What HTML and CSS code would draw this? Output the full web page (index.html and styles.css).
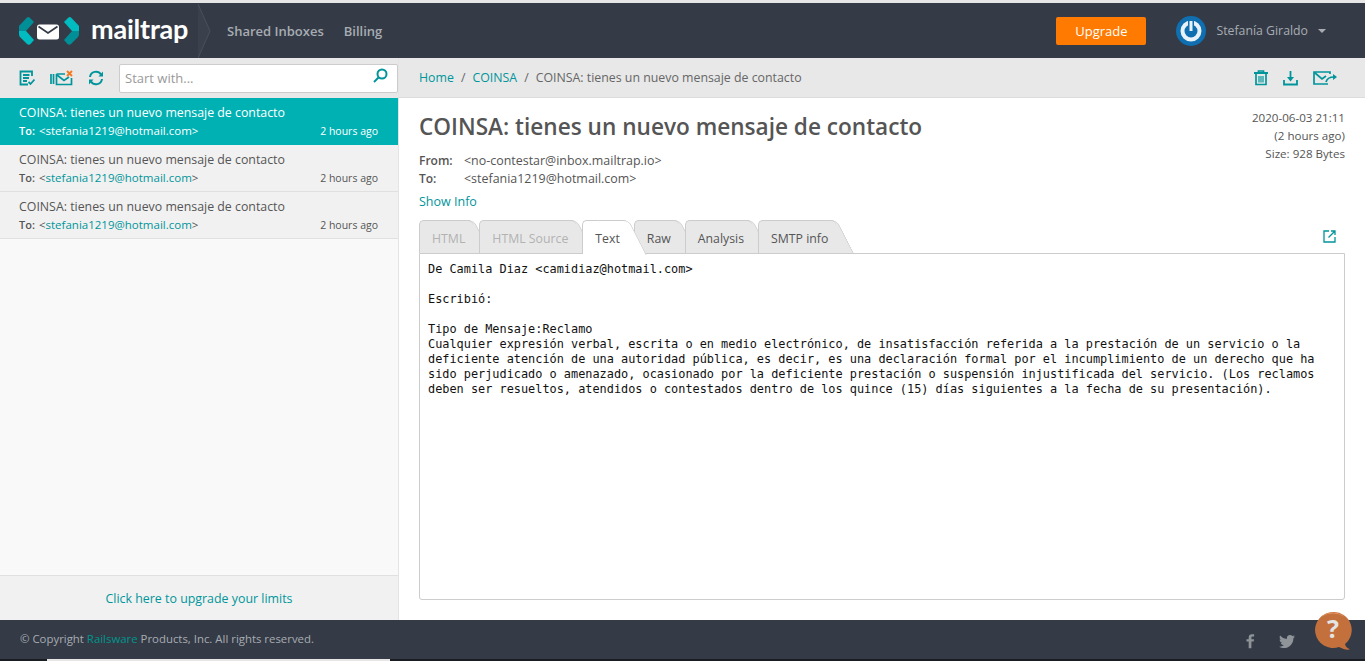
FILE: index.html
```html
<!DOCTYPE html>
<html lang="en">
<head>
    <meta charset="UTF-8">
    <title>Mailtrap</title>
    <link rel="stylesheet" href="styles.css">
</head>
<body>

    <div class="top-strip"></div>

    <header class="navbar">
        <div class="logo">
            <svg width="60" height="28" viewBox="0 0 60 28">
                <path d="M8 0.500 Q9.500 -0.500 11 1 L15 5 L7 14 L0 14 L0 9 Z" fill="#008f96"/>
                <path d="M0 14 L7 14 L15 23 L11.500 27 Q10 28.500 8 27 L1 20 Q0 19 0 17 Z" fill="#00bcc0"/>
                <path d="M52 0.500 Q50.500 -0.500 49 1 L45 5 L53 14 L60 14 L60 9 Z" fill="#00bcc0"/>
                <path d="M60 14 L53 14 L45 23 L48.500 27 Q50 28.500 52 27 L59 20 Q60 19 60 17 Z" fill="#008f96"/>
                <rect x="18" y="7.500" width="22" height="15" rx="2.500" fill="#fff"/>
                <path d="M19.500 9.500 L29 16 L38.500 9.500" fill="none" stroke="#343b47" stroke-width="1.800"/>
            </svg>
            <span class="logo-text">mailtrap</span>
        </div>
        <svg class="nav-chevron" width="14" height="54" viewBox="0 0 14 54">
            <path d="M0 0 L12 27 L0 54" fill="#3a414d" stroke="#4a515c" stroke-width="1"/>
        </svg>
        <nav class="nav-links">
            <a href="#">Shared Inboxes</a>
            <a href="#">Billing</a>
        </nav>
        <a class="btn-upgrade" href="#">Upgrade</a>
        <div class="user">
            <svg width="30" height="30" viewBox="0 0 30 30">
                <circle cx="15" cy="15" r="15" fill="#0f6fb0"/>
                <circle cx="15" cy="15" r="8.500" fill="none" stroke="#e8f2f8" stroke-width="4"/>
                <rect x="12" y="3" width="6" height="12" fill="#0f6fb0"/>
                <rect x="13.500" y="5" width="3" height="10" fill="#e8f2f8"/>
            </svg>
            <span class="user-name">Stefanía Giraldo</span>
            <span class="caret"></span>
        </div>
    </header>

    <div class="main">
        <aside class="sidebar">
            <div class="side-tools">
                <svg class="tool-icon" width="16" height="16" viewBox="0 0 16 16" fill="none" stroke="#00959b" stroke-width="1.800">
                    <path d="M13 6 V1.500 H1.500 V14.500 H9"/>
                    <path d="M4 5 H10.500 M4 8 H10 M4 11 H8"/>
                    <path d="M9.500 12 L11.500 14 L15.500 9.500"/>
                </svg>
                <svg class="tool-icon tool-clean" width="23" height="16" viewBox="0 0 23 16" fill="none" stroke="#00959b" stroke-width="1.700">
                    <path d="M1 4 V14 M3.500 4 V14"/>
                    <path d="M6.500 4 H15 M21.500 8 V14.500 H6.500 V4"/>
                    <path d="M7 5 L14 10.500 L19 7"/>
                    <path d="M17 1 L22 6 M22 1 L17 6" stroke="#f47a20" stroke-width="1.900"/>
                </svg>
                <svg class="tool-icon" width="16" height="16" viewBox="0 0 16 16" fill="none" stroke="#00959b" stroke-width="2">
                    <path d="M2 7 A6 6 0 0 1 13 4.500"/>
                    <path d="M14 9 A6 6 0 0 1 3 11.500"/>
                    <path d="M15 1.500 V6.500 H10.500 Z M1 14.500 V9.500 H5.500 Z" fill="#00959b" stroke="none"/>
                </svg>
                <div class="search">
                    <span class="search-text">Start with...</span>
                    <svg class="search-icon" width="15" height="15" viewBox="0 0 15 15" fill="none" stroke="#00959b" stroke-width="2">
                        <circle cx="9" cy="6" r="4.500"/>
                        <path d="M5.500 9.500 L1 14"/>
                    </svg>
                </div>
            </div>

            <ul class="msg-list">
                <li class="msg active">
                    <div class="msg-subject">COINSA: tienes un nuevo mensaje de contacto</div>
                    <div class="msg-meta">
                        <span><span class="msg-to">To:</span> &lt;<span class="msg-addr">stefania1219@hotmail.com</span>&gt;</span>
                        <span class="msg-time">2 hours ago</span>
                    </div>
                </li>
                <li class="msg">
                    <div class="msg-subject">COINSA: tienes un nuevo mensaje de contacto</div>
                    <div class="msg-meta">
                        <span><span class="msg-to">To:</span> &lt;<span class="msg-addr">stefania1219@hotmail.com</span>&gt;</span>
                        <span class="msg-time">2 hours ago</span>
                    </div>
                </li>
                <li class="msg">
                    <div class="msg-subject">COINSA: tienes un nuevo mensaje de contacto</div>
                    <div class="msg-meta">
                        <span><span class="msg-to">To:</span> &lt;<span class="msg-addr">stefania1219@hotmail.com</span>&gt;</span>
                        <span class="msg-time">2 hours ago</span>
                    </div>
                </li>
            </ul>

            <a class="upgrade-limits" href="#">Click here to upgrade your limits</a>
        </aside>

        <section class="content">
            <div class="crumbs-bar">
                <div class="crumbs">
                    <a href="#">Home</a><span class="sep">/</span><a href="#">COINSA</a><span class="sep">/</span><span>COINSA: tienes un nuevo mensaje de contacto</span>
                </div>
                <div class="crumb-icons">
                    <svg width="14" height="16" viewBox="0 0 14 16" fill="none" stroke="#00959b" stroke-width="1.700">
                        <path d="M0 3 H14" stroke-width="2"/>
                        <path d="M4.500 2.500 V1 H9.500 V2.500"/>
                        <path d="M2 4 V14.500 H12 V4"/>
                        <path d="M5 6 V12.500 M7 6 V12.500 M9 6 V12.500" stroke-width="1.200"/>
                    </svg>
                    <svg width="15" height="16" viewBox="0 0 15 16" fill="none" stroke="#00959b" stroke-width="1.800">
                        <path d="M1 10 V14.500 H14 V10"/>
                        <path d="M7.500 1 V9"/>
                        <path d="M4 7 L7.500 11.500 L11 7 Z" fill="#00959b" stroke="none"/>
                    </svg>
                    <svg width="24" height="14" viewBox="0 0 24 14" fill="none" stroke="#00959b" stroke-width="1.700">
                        <path d="M17 3 V1 H1 V13 H15"/>
                        <path d="M1.500 1.500 L9 8 L13 5"/>
                        <path d="M13 11 C14 7 17 6 21 6"/>
                        <path d="M20 3 L24 6 L20 9 Z" fill="#00959b" stroke="none"/>
                    </svg>
                </div>
            </div>

            <div class="message">
                <div class="msg-head">
                    <div class="head-left">
                        <h1>COINSA: tienes un nuevo mensaje de contacto</h1>
                        <div class="addr-row"><b>From:</b><span>&lt;no-contestar@inbox.mailtrap.io&gt;</span></div>
                        <div class="addr-row"><b>To:</b><span>&lt;stefania1219@hotmail.com&gt;</span></div>
                        <a class="show-info" href="#">Show Info</a>
                    </div>
                    <div class="head-right">
                        <div>2020-06-03 21:11</div>
                        <div>(2 hours ago)</div>
                        <div>Size: 928 Bytes</div>
                    </div>
                </div>

                <div class="tabs">
                    <a class="tab disabled" href="#">HTML</a>
                    <a class="tab disabled" href="#">HTML Source</a>
                    <a class="tab current" href="#">Text</a>
                    <a class="tab" href="#">Raw</a>
                    <a class="tab" href="#">Analysis</a>
                    <a class="tab" href="#">SMTP info</a>
                    <svg class="open-new" width="13" height="13" viewBox="0 0 13 13" fill="none" stroke="#00959b" stroke-width="1.300">
                        <path d="M6 1 H1 V12 H12 V7"/>
                        <path d="M5.500 7.500 L12 1 M8 1 H12 V5"/>
                    </svg>
                </div>

                <pre class="body-text">De Camila Diaz &lt;camidiaz@hotmail.com&gt;

Escribió:

Tipo de Mensaje:Reclamo
Cualquier expresión verbal, escrita o en medio electrónico, de insatisfacción referida a la prestación de un servicio o la
deficiente atención de una autoridad pública, es decir, es una declaración formal por el incumplimiento de un derecho que ha
sido perjudicado o amenazado, ocasionado por la deficiente prestación o suspensión injustificada del servicio. (Los reclamos
deben ser resueltos, atendidos o contestados dentro de los quince (15) días siguientes a la fecha de su presentación).</pre>
            </div>
        </section>
    </div>

    <footer class="footer">
        <span>© Copyright <a href="#">Railsware</a> Products, Inc. All rights reserved.</span>
        <div class="social">
            <svg width="9" height="16" viewBox="0 0 10 16"><path d="M3 16 V8.500 H0.500 V6 H3 V4 C3 1.500 4.500 0.500 6.500 0.500 H9 V3 H7.500 C6.500 3 6 3.500 6 4.300 V6 H9 L8.500 8.500 H6 V16 Z" fill="#8f9499"/></svg>
            <svg width="16" height="13" viewBox="0 0 16 13"><path d="M16 1.600 C15.400 1.900 14.800 2 14.100 2.100 C14.800 1.700 15.300 1 15.600 0.300 C14.900 0.700 14.200 1 13.500 1.100 C12.100 -0.400 9.800 -0.300 8.600 1.100 C7.900 1.900 7.700 3 7.900 4 C5.200 3.900 2.800 2.600 1.100 0.600 C0.200 2.100 0.700 4 2.100 5 C1.600 5 1.100 4.800 0.600 4.600 C0.600 6.200 1.800 7.600 3.300 7.900 C2.800 8 2.300 8.100 1.800 8 C2.200 9.300 3.500 10.200 4.900 10.300 C3.500 11.400 1.700 11.900 0 11.700 C1.500 12.600 3.200 13 5 13 C11 13 14.500 8 14.400 3.200 C15 2.800 15.600 2.200 16 1.600 Z" fill="#8f9499"/></svg>
        </div>
    </footer>
    <div class="bottom-strip"><span class="bottom-white"></span></div>

    <div class="help">
        <svg width="38" height="38" viewBox="0 0 38 38">
            <path d="M18 0 A18 18 0 1 0 24 35 C28 37 31 38 35 37.500 C32 36 30.500 34.500 30 32 A18 18 0 0 0 18 0 Z" fill="#c4703d"/>
            <path d="M6 5 A18 18 0 0 1 30 5 A24 24 0 0 0 6 5 Z" fill="#e2935f"/>
        </svg>
        <span class="help-mark">?</span>
    </div>

</body>
</html>
```

FILE: styles.css
```css
* {
    box-sizing: border-box;
}
html, body {
    height: 100%;
}
body {
    margin: 0;
    height: 661px;
    overflow: hidden;
    display: flex;
    flex-direction: column;
    position: relative;
    font-family: "Open Sans", "Noto Sans", sans-serif;
    font-size: 12px;
    color: #555;
    background-color: #fff;
}
a {
    color: #00959b;
    text-decoration: none;
}
.top-strip {
    height: 3px;
    background-color: #e6e6e6;
}
.navbar {
    height: 55px;
    background-color: #343b47;
    display: flex;
    align-items: center;
    padding-left: 19px;
}
.logo {
    display: flex;
    align-items: center;
    width: 177px;
}
.logo svg {
    flex: none;
}
.logo-text {
    margin-left: 12px;
    color: #fff;
    font-family: "Lato", sans-serif;
    font-size: 27px;
    font-weight: 700;
    letter-spacing: -0.200px;
    line-height: 30px;
    transform: translateY(-2px);
}
.nav-chevron {
    flex: none;
    margin-left: 2px;
}
.nav-links {
    display: flex;
    gap: 20px;
    margin-left: 15px;
}
.nav-links a {
    color: #a8acb2;
    font-size: 13px;
    font-weight: 600;
}
.btn-upgrade {
    margin-left: auto;
    width: 90px;
    height: 28px;
    line-height: 28px;
    text-align: center;
    background-color: #ff7a00;
    color: #fff;
    font-size: 13px;
    border-radius: 2px;
}
.user {
    display: flex;
    align-items: center;
    margin-left: 30px;
    margin-right: 39px;
}
.user-name {
    margin-left: 10px;
    color: #a8acb2;
    font-size: 12.300px;
}
.caret {
    margin-left: 10px;
    width: 0;
    height: 0;
    border-left: 4px solid transparent;
    border-right: 4px solid transparent;
    border-top: 4px solid #a8acb2;
}

.main {
    flex: 1;
    display: flex;
    min-height: 0;
}
.sidebar {
    width: 399px;
    flex: none;
    display: flex;
    flex-direction: column;
    border-right: 1px solid #e4e4e4;
    background-color: #f9f9f9;
}
.side-tools {
    height: 40px;
    flex: none;
    display: flex;
    align-items: center;
    padding: 0 0 0 19px;
    background-color: #e8e8e8;
}
.tool-icon {
    flex: none;
}
.tool-clean {
    margin-left: 15px;
}
.tool-clean + .tool-icon {
    margin-left: 15px;
}
.search {
    width: 279px;
    height: 29px;
    margin-left: 15px;
    padding: 0 9px 0 5px;
    display: flex;
    align-items: center;
    justify-content: space-between;
    background-color: #fff;
    border: 1px solid #ccc;
    border-radius: 2px;
    font-size: 13px;
    color: #999;
}
.search-icon {
    margin-top: -6px;
}
.msg-list {
    list-style: none;
    margin: 0;
    padding: 0;
    flex: 1;
}
.msg {
    height: 47px;
    padding: 6px 20px 0 19px;
    background-color: #f1f1f1;
    border-bottom: 1px solid #e0e0e0;
    color: #555;
}
.msg-subject {
    font-size: 12.350px;
    line-height: 18px;
}
.msg-meta {
    display: flex;
    justify-content: space-between;
    font-size: 11.500px;
    line-height: 18px;
}
.msg-to {
    font-size: 11px;
    font-weight: 600;
    margin-right: 1px;
}
.msg-addr {
    color: #00959b;
}
.msg-time {
    font-size: 10.500px;
}
.msg.active {
    background-color: #00b1b3;
    border-bottom: 0;
    color: #fff;
}
.msg.active .msg-addr {
    color: #fff;
}
.upgrade-limits {
    height: 45px;
    flex: none;
    line-height: 46px;
    text-align: center;
    font-size: 12.400px;
    background-color: #f1f1f1;
    border-top: 1px solid #e0e0e0;
    color: #00959b;
}

.content {
    flex: 1;
    min-width: 0;
    display: flex;
    flex-direction: column;
}
.crumbs-bar {
    height: 40px;
    flex: none;
    display: flex;
    align-items: center;
    justify-content: space-between;
    padding: 0 28px 0 20px;
    background-color: #e8e8e8;
    border-bottom: 1px solid #dcdcdc;
    font-size: 12.350px;
    color: #666;
}
.sep {
    margin: 0 7px;
}
.crumb-icons {
    display: flex;
    align-items: center;
    gap: 15px;
}
.message {
    flex: 1;
    min-height: 0;
    display: flex;
    flex-direction: column;
    padding: 0 20px 20px;
}
.msg-head {
    display: flex;
    justify-content: space-between;
    flex: none;
}
h1 {
    margin: 14px 0 10px;
    font-size: 22.600px;
    font-weight: 600;
    line-height: 30px;
    color: #555;
}
.addr-row {
    display: flex;
    line-height: 18px;
    font-size: 12.450px;
}
.addr-row b {
    width: 45px;
    font-size: 12px;
    font-weight: 600;
}
.show-info {
    display: block;
    margin-top: 5px;
    font-size: 12.500px;
    line-height: 18px;
}
.head-right {
    padding-top: 11px;
    text-align: right;
    font-size: 11.600px;
    line-height: 18px;
}
.tabs {
    flex: none;
    height: 33px;
    margin-top: 9px;
    display: flex;
    align-items: flex-end;
    gap: 6px;
    position: relative;
}
.tab {
    height: 33px;
    line-height: 36px;
    padding: 0 8px 0 12px;
    font-size: 12.300px;
    color: #555;
    background-color: #e8e8e8;
    border: 1px solid #ccc;
    border-bottom: 0;
    border-right: 0;
    border-radius: 5px 5px 0 0;
    position: relative;
}
/* slanted right edge, next tab paints over the foot of it */
.tab::after {
    content: "";
    position: absolute;
    top: -1px;
    right: -1px;
    width: 30px;
    height: 33px;
    background-color: #e8e8e8;
    border-top: 1px solid #ccc;
    border-right: 1px solid #ccc;
    border-top-right-radius: 6px;
    transform: skewX(27deg);
    transform-origin: top;
    z-index: -1;
}
.tab.disabled {
    color: #b2b2b2;
}
.tab.current {
    background-color: #fff;
    z-index: 2;
    height: 34px;
    margin-bottom: -1px;
}
.tab.current::after {
    background-color: #fff;
    height: 34px;
}
.open-new {
    position: absolute;
    right: 9px;
    top: 10px;
}
.body-text {
    flex: 1;
    min-height: 0;
    margin: 0;
    padding: 8px 8px;
    background-color: #fff;
    border: 1px solid #ccc;
    border-radius: 0 0 3px 3px;
    font-family: "DejaVu Sans Mono", monospace;
    font-size: 11.880px;
    line-height: 15px;
    color: #111;
    white-space: pre-wrap;
}

.footer {
    height: 39px;
    flex: none;
    display: flex;
    align-items: center;
    justify-content: space-between;
    padding: 0 20px 2px;
    background-color: #343b47;
    color: #a8acb2;
    font-size: 11.400px;
}
.footer a {
    color: #00958c;
}
.social {
    display: flex;
    align-items: center;
    gap: 24px;
    margin-right: 50px;
    margin-top: 5px;
}
.bottom-strip {
    height: 2px;
    flex: none;
    background-color: #1a1d22;
}
.bottom-white {
    display: block;
    width: 343px;
    height: 2px;
    margin-left: 47px;
    background-color: #e6e6e6;
}
.help {
    position: absolute;
    left: 1315px;
    top: 612px;
    width: 38px;
    height: 38px;
}
.help-mark {
    position: absolute;
    left: 0;
    top: 1px;
    width: 36px;
    text-align: center;
    color: #e4e4e4;
    font-size: 25px;
    font-weight: 700;
    line-height: 30px;
}
```
